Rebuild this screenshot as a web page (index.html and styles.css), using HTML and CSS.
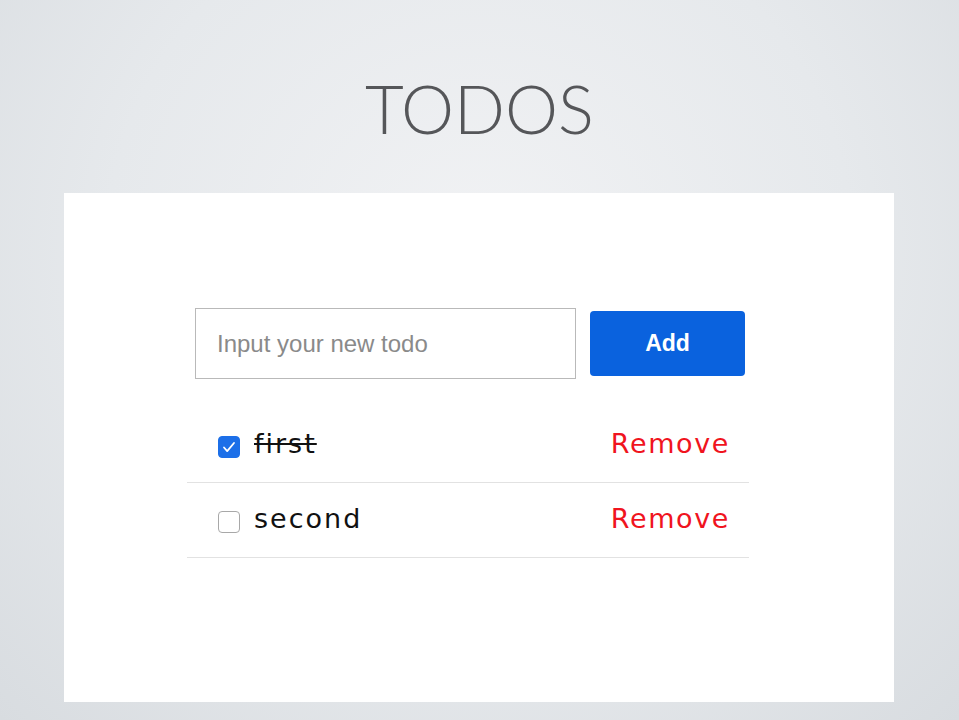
FILE: index.html
```html
<!DOCTYPE html>
<html lang="en">
<head>
    <meta charset="UTF-8">
    <meta name="viewport" content="width=device-width, initial-scale=1.0">
    <title>Todos</title>
    <link rel="stylesheet" href="styles.css">
</head>
<body>
    <header>
        <h1>TODOS</h1>
    </header>
    <div class="container">
        <form class="todo-form">
            <input type="text" class="todo-input" placeholder="Input your new todo">
            <button type="button" class="add-btn">Add</button>
        </form>
        <ul class="todo-list">
            <li class="todo-item done">
                <label class="todo-label">
                    <span class="check checked">
                        <svg viewBox="0 0 22 22" width="22" height="22"><path d="M6 11.5l3.2 3.6L16 7" fill="none" stroke="#fff" stroke-width="1.8" stroke-linecap="round" stroke-linejoin="round"/></svg>
                    </span>
                    <span class="todo-text">first</span>
                </label>
                <a class="remove" href="#">Remove</a>
            </li>
            <li class="todo-item">
                <label class="todo-label">
                    <span class="check"></span>
                    <span class="todo-text">second</span>
                </label>
                <a class="remove" href="#">Remove</a>
            </li>
        </ul>
    </div>
</body>
</html>
```

FILE: styles.css
```css
html, body {
    height: 100%;
}
body {
    margin: 0;
    padding: 0;
    font-family: "Liberation Sans", Arial, sans-serif;
    background: radial-gradient(ellipse at 50% 35%, #f1f2f4 0%, #e6e9ec 55%, #d8dce0 100%);
    overflow: hidden;
}
header {
    height: 193px;
    display: flex;
    justify-content: center;
    padding-top: 75px;
    box-sizing: border-box;
}
header h1 {
    margin: 0;
    font-family: Lato, sans-serif;
    font-weight: 300;
    font-size: 67px;
    line-height: 67px;
    color: #555659;
    letter-spacing: 0;
}
.container {
    width: 830px;
    height: 509px;
    margin-left: 64px;
    background: #fff;
    padding-top: 115px;
    box-sizing: border-box;
}
.todo-form {
    display: flex;
    align-items: center;
    margin-left: 131px;
    gap: 14px;
}
.todo-input {
    width: 381px;
    height: 71px;
    box-sizing: border-box;
    border: 1px solid #b9b9b9;
    padding: 0 21px;
    font-family: "Liberation Sans", Arial, sans-serif;
    font-size: 24px;
    color: #333;
    outline: none;
}
.todo-input::placeholder {
    color: #8a8a8a;
}
.add-btn {
    width: 155px;
    height: 65px;
    background-color: #0a62de;
    color: #fff;
    border: none;
    border-radius: 4px;
    font-family: "Liberation Sans", Arial, sans-serif;
    font-weight: bold;
    font-size: 23px;
    cursor: pointer;
}
.todo-list {
    list-style: none;
    margin: 29px 0 0 123px;
    padding: 0;
    width: 562px;
}
.todo-item {
    display: flex;
    align-items: center;
    justify-content: space-between;
    height: 74px;
    border-bottom: 1px solid #e2e2e2;
    padding: 0 19px 0 31px;
}
.todo-label {
    display: flex;
    align-items: center;
    gap: 14px;
}
.check {
    width: 22px;
    height: 22px;
    box-sizing: border-box;
    border: 1px solid #a8a8a8;
    border-radius: 4px;
    background: #fff;
    margin-top: 4px;
}
.check.checked {
    background: #1c6fe8;
    border-color: #1c6fe8;
}
.check svg {
    display: block;
    margin: -1px;
}
.todo-text {
    font-family: "DejaVu Sans", sans-serif;
    font-size: 27px;
    color: #111;
    letter-spacing: 2px;
    margin-top: -3px;
}
.done .todo-text {
    text-decoration: line-through;
}
.remove {
    font-family: "DejaVu Sans", sans-serif;
    font-size: 27px;
    color: #f0141e;
    text-decoration: none;
    letter-spacing: 1.6px;
    margin-top: -3px;
}
```
